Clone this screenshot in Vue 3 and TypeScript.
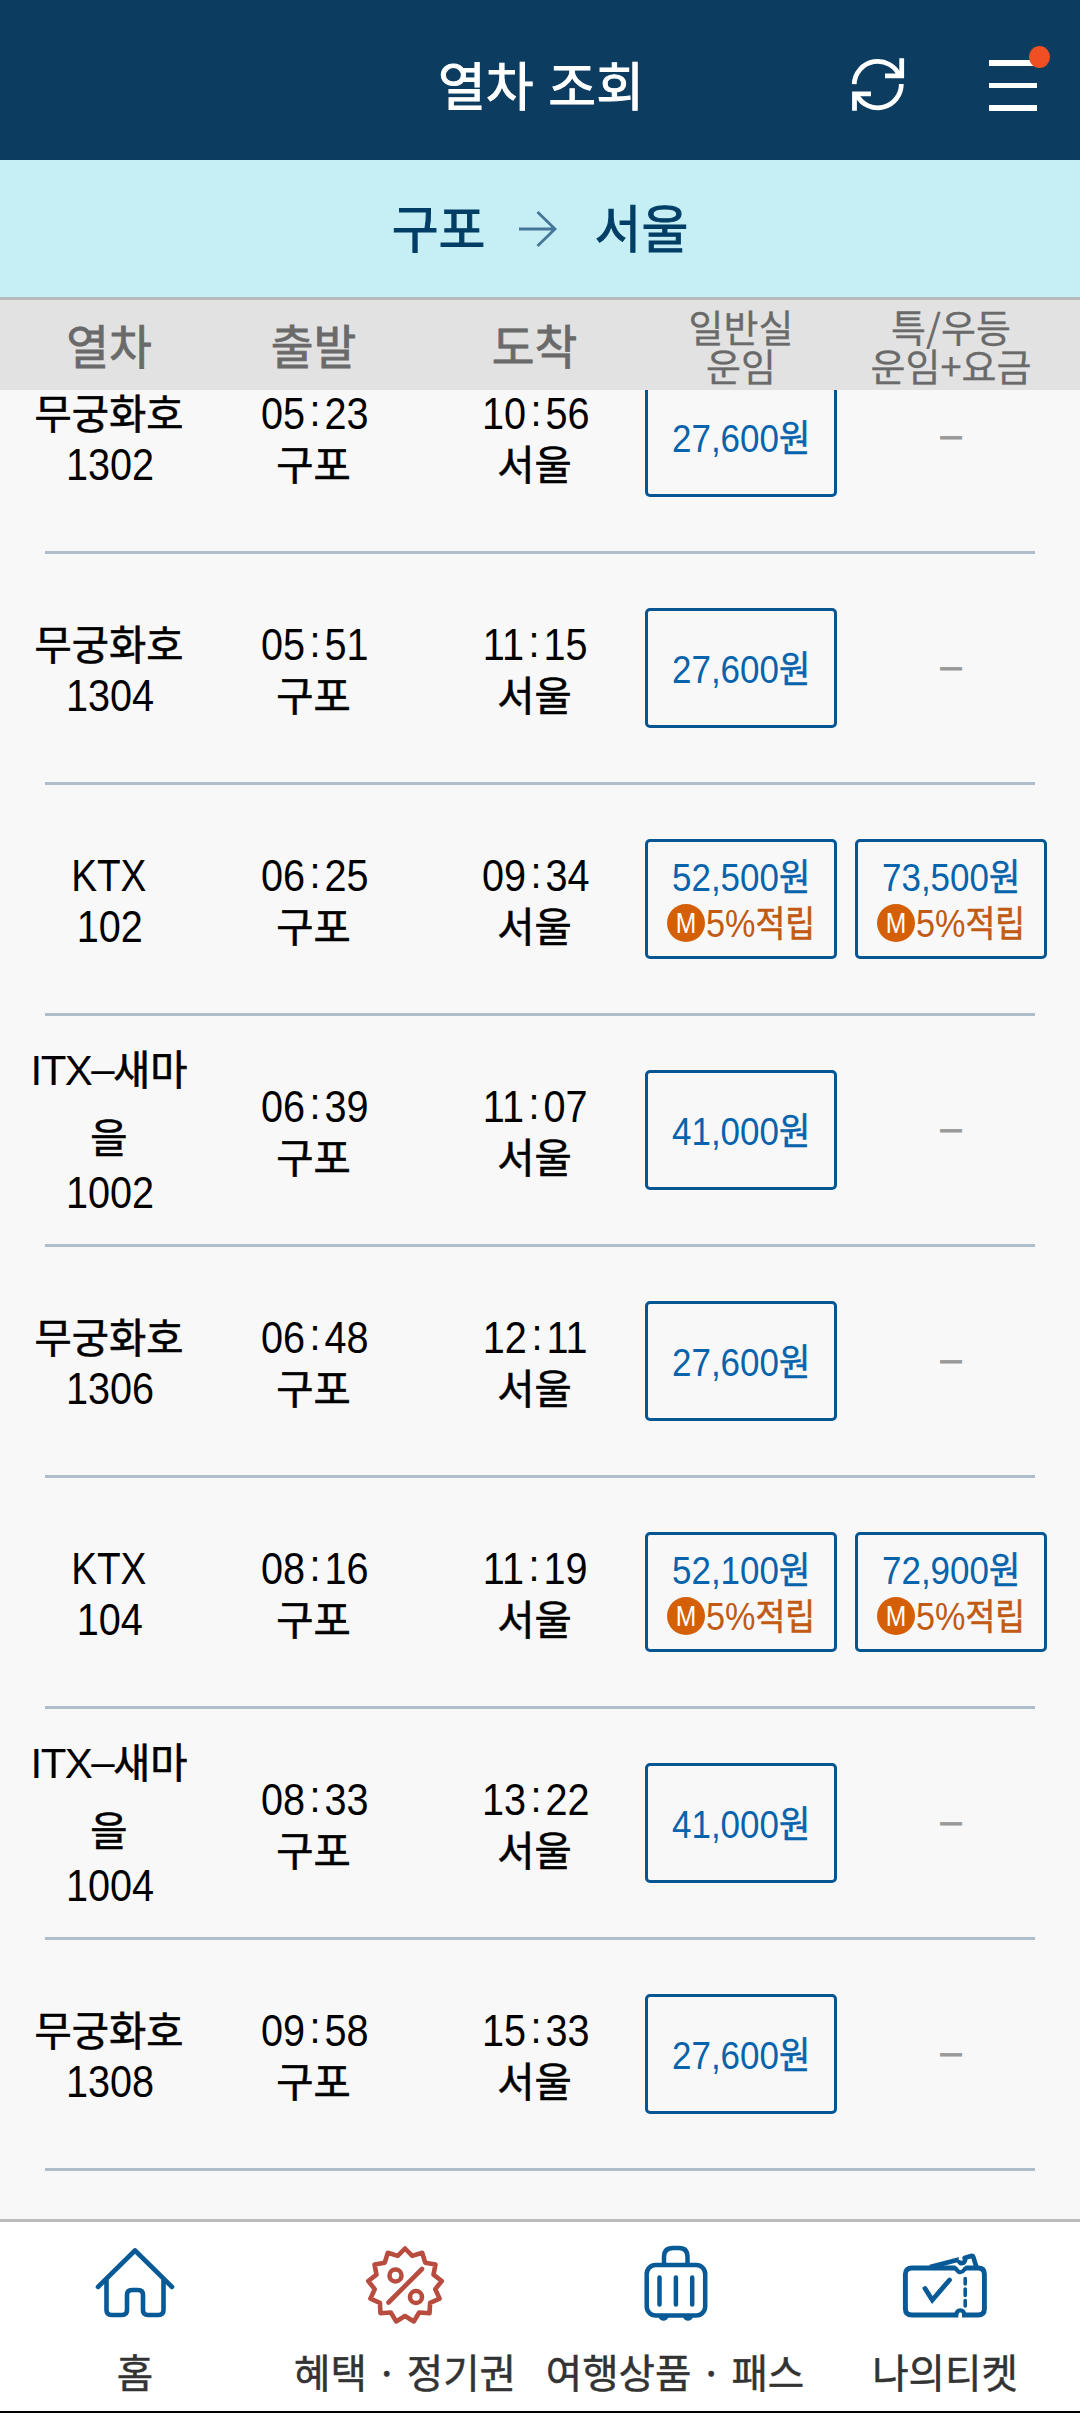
<script setup lang="ts">
interface Fare {
  price: string
  mileage?: boolean
}

interface Train {
  name: string[]
  latin?: boolean
  no: string
  dep: string
  arr: string
  general: Fare
  special?: Fare
}

const trains: Train[] = [
  { name: ['무궁화호'], no: '1302', dep: '05:23', arr: '10:56', general: { price: '27,600' } },
  { name: ['무궁화호'], no: '1304', dep: '05:51', arr: '11:15', general: { price: '27,600' } },
  { name: ['KTX'], latin: true, no: '102', dep: '06:25', arr: '09:34', general: { price: '52,500', mileage: true }, special: { price: '73,500', mileage: true } },
  { name: ['새마', '을'], no: '1002', dep: '06:39', arr: '11:07', general: { price: '41,000' } },
  { name: ['무궁화호'], no: '1306', dep: '06:48', arr: '12:11', general: { price: '27,600' } },
  { name: ['KTX'], latin: true, no: '104', dep: '08:16', arr: '11:19', general: { price: '52,100', mileage: true }, special: { price: '72,900', mileage: true } },
  { name: ['새마', '을'], no: '1004', dep: '08:33', arr: '13:22', general: { price: '41,000' } },
  { name: ['무궁화호'], no: '1308', dep: '09:58', arr: '15:33', general: { price: '27,600' } },
]

const fares = (t: Train): (Fare | undefined)[] => [t.general, t.special]
const hour = (time: string): string => time.slice(0, 2)
const minute = (time: string): string => time.slice(3)

// Thirteen-tooth starburst outline for the discount icon
const TEETH = 13
const burst: string = Array.from({ length: TEETH * 2 }, (_, i) => {
  const a = (Math.PI * i) / TEETH
  const r = i % 2 === 0 ? 37 : 30.5
  return `${(40 + r * Math.sin(a)).toFixed(2)},${(40.5 - r * Math.cos(a)).toFixed(2)}`
}).join(' ')
</script>

<template>
  <div class="screen">
    <header class="top">
      <h1>열차 조회</h1>
      <div class="actions">
        <svg class="refresh" width="60" height="60" viewBox="0 0 60 60" fill="none" stroke="#fff" stroke-width="4.8">
          <path d="M6.2 30.2A23.6 23.6 0 0 1 51.8 22.5" />
          <path d="M53.7 4.3V21.8H37" />
          <path d="M53.3 30A23.6 23.6 0 0 1 9 41.5" />
          <path d="M6.5 56.7V39.8H23" />
        </svg>
        <div class="menu">
          <i></i><i></i><i></i>
          <b></b>
        </div>
      </div>
    </header>

    <section class="route">
      <span>구포</span>
      <svg width="40" height="38" viewBox="0 0 40 38" fill="none" stroke="#46759a" stroke-width="2.8">
        <path d="M1 19H37M19.5 2L37 19L19.5 36" />
      </svg>
      <span>서울</span>
    </section>

    <div class="grid head">
      <div class="big"><span>열차</span></div>
      <div class="big"><span>출발</span></div>
      <div class="big arr"><span>도착</span></div>
      <div class="small"><span>일반실</span><span>운임</span></div>
      <div class="small"><span>특/우등</span><span>운임+요금</span></div>
    </div>

    <main class="list">
      <div class="rows">
        <div v-for="t in trains" :key="t.no" class="grid row">
          <div class="cell" :class="{ three: t.name.length > 1 }">
            <template v-if="t.name.length > 1">
              <span class="mix"><span class="itx">ITX<i>–</i></span>{{ t.name[0] }}</span>
              <span class="mix">{{ t.name[1] }}</span>
            </template>
            <span v-else :class="t.latin ? 'lat' : 'ko'">{{ t.name[0] }}</span>
            <span class="num">{{ t.no }}</span>
          </div>
          <div class="cell">
            <span class="num">{{ hour(t.dep) }}<i>:</i>{{ minute(t.dep) }}</span>
            <span class="ko">구포</span>
          </div>
          <div class="cell arr">
            <span class="num">{{ hour(t.arr) }}<i>:</i>{{ minute(t.arr) }}</span>
            <span class="ko">서울</span>
          </div>
          <div v-for="(f, i) in fares(t)" :key="i" class="fare">
            <div v-if="f" class="box">
              <span class="price">{{ f.price }}<em>원</em></span>
              <span v-if="f.mileage" class="mile">
                <span class="m"><span>M</span></span><span class="rate">5%<em>적립</em></span>
              </span>
            </div>
            <span v-else class="none">–</span>
          </div>
        </div>
      </div>
    </main>

    <nav class="tabs">
      <a>
        <svg width="84" height="80" viewBox="0 0 84 80" fill="none" stroke="#075a96" stroke-width="4.6" stroke-linecap="round" stroke-linejoin="round">
          <path d="M5 42L42 5.5L79 42" />
          <path d="M13.5 35V65Q13.5 70 18.5 70H29Q34 70 34 65V50Q34 45 39 45H45Q50 45 50 50V65Q50 70 55 70H65.5Q70.500 70 70.5 65V35" />
        </svg>
        <span>홈</span>
      </a>
      <a>
        <svg width="80" height="80" viewBox="0 0 80 80" fill="none" stroke="#b84c3f" stroke-width="4.6" stroke-linecap="round" stroke-linejoin="round">
          <polygon :points="burst" />
          <path d="M23.5 57.5L57 24" />
          <circle cx="30.5" cy="30.5" r="6" />
          <circle cx="51" cy="52" r="6" />
        </svg>
        <span>혜택 · 정기권</span>
      </a>
      <a>
        <svg width="80" height="80" viewBox="0 0 80 80" fill="none" stroke="#075a96" stroke-width="4.5" stroke-linecap="round">
          <rect x="11.7" y="20" width="58.5" height="50.5" rx="9" />
          <path d="M29 19V12Q29 3 38 3H44Q52.5 3 52.5 12V19" />
          <path d="M24.5 32.5V59.5M40.9 32.5V59.5M57.2 32.5V59.5" />
          <path d="M24.5 72A4.3 4.3 0 0 0 32.5 72ZM49 72A4.3 4.3 0 0 0 57 72Z" fill="#075a96" stroke-width="2" />
        </svg>
        <span>여행상품 · 패스</span>
      </a>
      <a>
        <svg width="88" height="80" viewBox="0 0 88 80" fill="none" stroke="#075a96" stroke-width="4.9">
          <path d="M54.5 23H11Q4.400 23 4.4 29V64Q4.4 70 11 70H57.3M61 70H77Q83.4 70 83.4 64V29Q83.4 23 77 23H64.5" />
          <path d="M53 23Q55 23 55.5 24.5Q59.3 30 63.5 24.5Q64 23 66 23" stroke-width="4.2" />
          <path d="M55.3 70Q55.5 65.5 59.4 65.3Q63 65.5 63.5 70" stroke-width="4" />
          <path d="M29 22L57 14.7Q59 19.5 62.5 17.8Q65 15.5 63.5 13L70 11Q71.8 10.5 72.5 12.5L75.5 22.5" stroke-width="4.6" stroke-linejoin="round" />
          <path d="M58.5 15L60.5 9" stroke="#fff" stroke-width="2.4" />
          <path d="M64.2 33.5V39M64.2 44V50.5M64.2 55.5V61" stroke-width="3.6" stroke-linecap="round" />
          <path d="M24 43.5L31.3 55L48.5 35" stroke-width="4.8" stroke-linecap="round" />
        </svg>
        <span>나의티켓</span>
      </a>
    </nav>
  </div>
</template>

<style>
body {
  margin: 0;
  background: #f8f8f8;
}
</style>

<style scoped>
.screen {
  width: 1080px;
  height: 2413px;
  display: flex;
  flex-direction: column;
  background: #f8f8f8;
  overflow: hidden;
  font-family: "Liberation Sans", "Noto Sans CJK KR", sans-serif;
}
span { white-space: nowrap; }

.top {
  position: relative;
  flex: none;
  height: 160px;
  background: #0c3c60;
  display: flex;
  align-items: center;
  justify-content: center;
}
.top h1 {
  margin: 8px 0 0 2px;
  font-family: "Noto Sans CJK KR", sans-serif;
  font-size: 52px;
  font-weight: 400;
  line-height: 70px;
  word-spacing: 3px;
  color: #fff;
  -webkit-text-stroke: 1px #fff;
}
.actions {
  position: absolute;
  top: 0;
  right: 0;
  display: flex;
}
.refresh { margin: 54px 81px 0 0; }
.menu {
  position: relative;
  width: 48px;
  margin: 60px 43px 0 0;
  display: flex;
  flex-direction: column;
  gap: 17px;
}
.menu i {
  height: 5.5px;
  background: #fff;
}
.menu b {
  position: absolute;
  left: 40px;
  top: -14px;
  width: 21px;
  height: 22px;
  border-radius: 50%;
  background: #f04e23;
}

.route {
  flex: none;
  box-sizing: border-box;
  height: 140px;
  border-bottom: 3px solid #b5babb;
  background: #c6eff5;
  display: flex;
  align-items: center;
  justify-content: center;
  font-family: "Noto Sans CJK KR", sans-serif;
  font-size: 51px;
  font-weight: 400;
  color: #003e66;
  -webkit-text-stroke: 1px #003e66;
}
.route span { margin-bottom: 6px; }
.route svg { margin: 0 37px 0 32px; }

.grid {
  display: grid;
  grid-template-columns: 218px 191px 236px 192px 192px;
}
.grid > :nth-child(5) { margin-left: 18px; margin-right: -18px; }
.arr { padding-left: 15px; }

.head {
  flex: none;
  height: 90px;
  background: #e2e2e2;
  color: #6a6a6a;
  font-family: "Noto Sans CJK KR", sans-serif;
}
.head > div {
  display: flex;
  flex-direction: column;
  align-items: center;
  justify-content: center;
}
.head > .big {
  padding-bottom: 2px;
  font-size: 46.5px;
  line-height: 60px;
  -webkit-text-stroke: 0.8px #6a6a6a;
}
.head > .small {
  padding-bottom: 1px;
  font-size: 38px;
  line-height: 39px;
  -webkit-text-stroke: 0.3px #6a6a6a;
}

.list {
  flex: 1;
  min-height: 0;
  overflow: hidden;
}
.rows { margin-top: -68px; }
.row {
  position: relative;
  box-sizing: border-box;
  height: 231px;
  padding-bottom: 2px;
}
.row::after {
  content: "";
  position: absolute;
  left: 45px;
  right: 45px;
  bottom: -1px;
  height: 3px;
  background: #b0becb;
}
.cell {
  display: flex;
  flex-direction: column;
  align-items: center;
  justify-content: center;
  color: #000;
  line-height: 51px;
}
.ko, .mix {
  font-family: "Noto Sans CJK KR", sans-serif;
  font-size: 40.5px;
  -webkit-text-stroke: 0.6px #000;
}
.num, .lat {
  font-family: "Liberation Sans", sans-serif;
  font-size: 44px;
  transform: translate(1px, 2px) scaleX(0.9);
}
.lat { transform: translateY(2px) scaleX(0.88); }
.num i {
  position: relative;
  top: -3px;
  font-style: normal;
  padding: 0 4.5px 0 5px;
}
.mix { line-height: 65px; }
.itx {
  font-family: "Liberation Sans", sans-serif;
  font-size: 42px;
  letter-spacing: -1.6px;
  -webkit-text-stroke: 0;
}
.itx i {
  position: relative;
  top: -2px;
  font-style: normal;
}
.three { padding-bottom: 10px; }
.three .num { line-height: 46px; }

.fare {
  display: flex;
  align-items: center;
  justify-content: center;
}
.box {
  box-sizing: border-box;
  width: 192px;
  height: 120px;
  border: 3px solid #085691;
  border-radius: 5px;
  display: flex;
  flex-direction: column;
  align-items: center;
  justify-content: center;
}
.price {
  font-size: 38px;
  line-height: 48px;
  color: #0763ab;
  transform: translateY(2px) scaleX(0.92);
}
.price em, .rate em {
  font-family: "Noto Sans CJK KR", sans-serif;
  font-style: normal;
  font-size: 36px;
  line-height: 40px;
  -webkit-text-stroke: 0.6px currentColor;
}
.price em { font-size: 37px; }
.mile {
  display: flex;
  align-items: center;
  height: 46px;
  color: #c05a14;
}
.m {
  width: 38px;
  height: 38px;
  margin: 0 1px 0 -2px;
  border-radius: 50%;
  background: #d45f07;
  color: #fff;
  font-size: 29px;
  line-height: 38px;
  text-align: center;
}
.m span { display: inline-block; transform: scaleX(0.85); }
.rate {
  font-size: 38px;
  line-height: 46px;
  transform: translateY(1px) scaleX(0.9);
  transform-origin: left;
  margin-right: -15px;
}
.none {
  font-size: 38px;
  color: #999;
  transform: translateY(-1px);
  -webkit-text-stroke: 0.8px #999;
}

.tabs {
  flex: none;
  box-sizing: border-box;
  height: 194px;
  border-top: 3px solid #b9bcbb;
  border-bottom: 2px solid #000;
  background: #fff;
  display: grid;
  grid-template-columns: repeat(4, 1fr);
}
.tabs a {
  display: flex;
  flex-direction: column;
  align-items: center;
  padding-top: 23px;
}
.tabs svg { flex: none; }
.tabs span {
  margin-top: 16px;
  font-family: "Noto Sans CJK KR", sans-serif;
  font-size: 39.6px;
  line-height: 60px;
  color: #333;
  -webkit-text-stroke: 0.5px #333;
}
</style>
